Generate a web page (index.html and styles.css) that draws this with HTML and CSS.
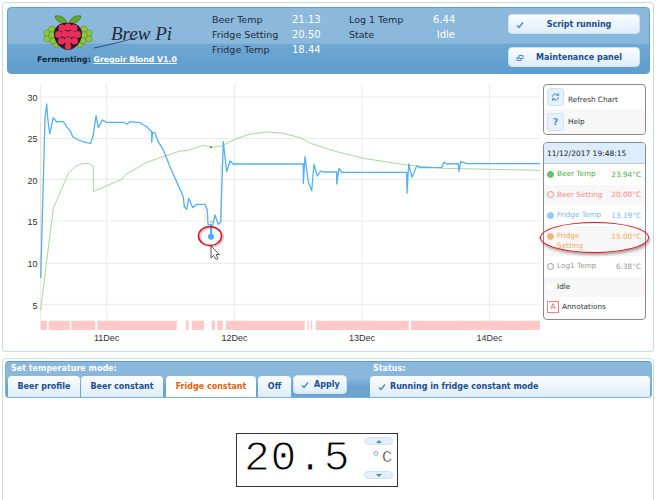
FILE: index.html
```html
<!DOCTYPE html>
<html lang="en">
<head>
    <meta charset="UTF-8">
    <meta name="viewport" content="width=device-width, initial-scale=1.0">
    <title>BrewPi</title>
    <link rel="stylesheet" href="styles.css">
</head>
<body>
    <div class="panel top-panel">
        <div class="header">
            <div class="brand">
                <div class="logo-row">
                    <svg class="logo" width="54" height="36" viewBox="0 0 54 36">
                        <!-- hops -->
                        <g fill="#8cc63f" stroke="#55801f" stroke-width="0.5">
                            <circle cx="6" cy="18" r="3.2"/><circle cx="11" cy="14" r="3.2"/><circle cx="11" cy="20" r="3.2"/><circle cx="6" cy="24" r="3.2"/>
                            <circle cx="12" cy="26" r="3.2"/><circle cx="16" cy="18" r="3"/><circle cx="15" cy="30" r="2.6"/>
                            <circle cx="48" cy="18" r="3.2"/><circle cx="43" cy="14" r="3.2"/><circle cx="43" cy="20" r="3.2"/><circle cx="48" cy="24" r="3.2"/>
                            <circle cx="42" cy="26" r="3.2"/><circle cx="38" cy="18" r="3"/><circle cx="39" cy="30" r="2.6"/>
                        </g>
                        <!-- leaves -->
                        <path d="M26 9C20 9 15 6 14 1C20 0 25 3 26 9Z" fill="#5fa82b" stroke="#2f6b14" stroke-width="0.6"/>
                        <path d="M28 9C34 9 39 6 40 1C34 0 29 3 28 9Z" fill="#5fa82b" stroke="#2f6b14" stroke-width="0.6"/>
                        <!-- berry -->
                        <path d="M27 8C34 7 41 11 41 19C41 28 33 35 27 35C21 35 13 28 13 19C13 11 20 7 27 8Z" fill="#2b1a20"/>
                        <g fill="#e8305c">
                            <circle cx="21" cy="13" r="3.6"/><circle cx="27" cy="12" r="3.4"/><circle cx="33" cy="13" r="3.6"/>
                            <circle cx="17.5" cy="19.5" r="3.4"/><circle cx="24" cy="19" r="3.6"/><circle cx="30.5" cy="19" r="3.6"/><circle cx="36.5" cy="19.5" r="3.4"/>
                            <circle cx="20.5" cy="26" r="3.5"/><circle cx="27" cy="25.5" r="3.6"/><circle cx="33.5" cy="26" r="3.5"/>
                            <circle cx="27" cy="31.5" r="3.2"/>
                        </g>
                    </svg>
                    <div class="signature">
                        <span class="signature-text">Brew Pi</span>
                        <svg class="signature-swoosh" width="78" height="30" viewBox="0 0 78 30">
                            <path d="M0 27C14 24 28 21 44 16" fill="none" stroke="#1d2b3a" stroke-width="0.7"/>
                        </svg>
                    </div>
                </div>
                <p class="fermenting">Fermenting: <a href="#" class="beer-name">Gregoir Blond V1.0</a></p>
            </div>

            <div class="stats">
                <span class="stat-label">Beer Temp</span><span class="stat-value">21.13</span>
                <span class="stat-label">Log 1 Temp</span><span class="stat-value right">6.44</span>
                <span class="stat-label">Fridge Setting</span><span class="stat-value">20.50</span>
                <span class="stat-label">State</span><span class="stat-value right">Idle</span>
                <span class="stat-label">Fridge Temp</span><span class="stat-value">18.44</span>
            </div>

            <div class="header-buttons">
                <button class="btn header-btn">
                    <svg class="btn-icon" width="8" height="8" viewBox="0 0 8 8"><path d="M1 4.5L3 6.5L7 1.5" fill="none" stroke="#4f8cc4" stroke-width="1.5"/></svg>
                    <span>Script running</span>
                </button>
                <button class="btn header-btn">
                    <svg class="btn-icon" width="8" height="8" viewBox="0 0 8 8"><path d="M3 1.5H7V4.5H3ZM1 3.5H3M1 3.5V6.5H5V4.5" fill="none" stroke="#4f8cc4"/></svg>
                    <span>Maintenance panel</span>
                </button>
            </div>
        </div>

        <div class="chart-row">
            <svg class="chart" width="534" height="277" viewBox="7 74 534 277">
                <g class="grid">
                    <path d="M40.7 97H540M40.7 138.5H540M40.7 179.5H540M40.7 263.3H540M40.7 304.3H540"/>
                    <path d="M40.7 84V330M106.7 84V330M234.4 84V330M362 84V330M489.4 84V330"/>
                </g>
                <path class="setting-line" d="M40.7 221H540"/>

                <g class="idle-band">
                    <rect x="40.7" y="320.7" width="6.3" height="9.3"/>
                    <rect x="48.7" y="320.7" width="21" height="9.3"/>
                    <rect x="71.3" y="320.7" width="24" height="9.3"/>
                    <rect x="97.3" y="320.7" width="79.4" height="9.3"/>
                    <rect x="186" y="320.7" width="2.7" height="9.3"/>
                    <rect x="191.7" y="320.7" width="12.3" height="9.3"/>
                    <rect x="211.7" y="320.7" width="3.3" height="9.3"/>
                    <rect x="217.3" y="320.7" width="5.4" height="9.3"/>
                    <rect x="226" y="320.7" width="78.7" height="9.3"/>
                    <rect x="307.3" y="320.7" width="1.4" height="9.3"/>
                    <rect x="310.7" y="320.7" width="1.6" height="9.3"/>
                    <rect x="315.7" y="320.7" width="93" height="9.3"/>
                    <rect x="411" y="320.7" width="129" height="9.3"/>
                </g>

                <path class="line-fridge-setting" d="M40.7 122V278M205 208V222M221 163V222"/>
                <path class="line-beer" d="M40.7 310L43.3 288L48.3 248.3L53.3 208.3L58.3 196.7L68.3 173.3L75 166.7L81.7 163.7L88.3 163.3L93.3 166.3V191.7L121.7 179.3L126 174.3L146.7 162.3L180 151L186.7 150.7L203.3 145.3L210.7 147.3L221.7 146L233.3 140L250 134L266.7 132L283.3 133.3L300 137.7L311.7 143.7L336.7 151.7L363.3 158.3L406.7 165L443.3 168.3L540 170.3"/>
                <path class="line-fridge" d="M40.7 278L45 118L46.7 104L47.7 118L49.7 134L53.3 117.7L56.7 122L58.3 121.7L63.3 121.7L66.7 126.7L70.7 131.7L72.7 136.7L78.3 140L86.7 142.7L90.7 143.3L93.3 135L96 115.7L98.3 127.7L102.3 120L106.7 122.3H123.3L126.7 124.3L130 121.7L140 122.7L146.7 126.7L151.7 131.7V142.3L152.7 132.3L155 133L158.3 141.7L163.3 150L170 166.7L183.3 196.7L184.3 206.7L186.7 209.3L188.7 198.3L192.7 207.7L196.7 204.3H205L207.3 210L208 224.3L210.7 225V236.7H211.5V225H212.7L215 215L218.3 224.3L220.7 222.3L223.3 141.7L226.7 171.7L230 161L233.3 164H303.3V183.3L305 156.7L308.3 181.7L311.7 190.7L314 164.3L317.3 176L320.7 171L323.3 172H336.7V184L339 168.3L341.7 172.3H406.7L407 193.3L408.7 164L412 177.3L416.7 166L420 167.7H441.7L444 162.3L446.7 164L458.3 163.7L459 171.7L460.7 161.3L466.7 163.7H540"/>

                <circle class="dot-beer" cx="211" cy="147.3" r="1"/>
                <circle class="dot-setting" cx="211" cy="222" r="1"/>
                <circle class="dot-log" cx="539.5" cy="238" r="1"/>
                <circle class="dot-fridge" cx="211" cy="236.7" r="3"/>

                <g class="axis-y">
                    <text x="37.5" y="101">30</text>
                    <text x="37.5" y="142">25</text>
                    <text x="37.5" y="184">20</text>
                    <text x="37.5" y="225">15</text>
                    <text x="37.5" y="267">10</text>
                    <text x="37.5" y="309">5</text>
                </g>
                <g class="axis-x">
                    <text x="106.7" y="341">11Dec</text>
                    <text x="234.4" y="341">12Dec</text>
                    <text x="362" y="341">13Dec</text>
                    <text x="489.4" y="341">14Dec</text>
                </g>

                <ellipse class="marker-shadow" cx="211.5" cy="237" rx="11.5" ry="9.5"/>
                <ellipse class="marker" cx="210" cy="236" rx="11.5" ry="9.5"/>
                <path class="mouse-cursor" d="M211 246V258L213.5 255.5L216 259.5L218 258.5L216 254.5H219.5Z"/>
            </svg>

            <div class="side">
                <div class="side-box">
                    <div class="tool-row">
                        <span class="tool-icon">
                            <svg width="9" height="10" viewBox="0 0 9 10"><path d="M1.5 5A3 3 0 0 1 7 3.3M7.5 5A3 3 0 0 1 2 6.7M7.5 1V3.5H5M1.5 9V6.5H4" fill="none" stroke="#6ea5d6" stroke-width="1.2"/></svg>
                        </span>
                        <span class="tool-label">Refresh Chart</span>
                    </div>
                    <div class="tool-row">
                        <span class="tool-icon tool-help">?</span>
                        <span>Help</span>
                    </div>
                </div>

                <div class="side-box legend">
                    <div class="legend-time">11/12/2017 19:48:15</div>
                    <div class="legend-row beer">
                        <span class="legend-dot filled"></span><span class="legend-name">Beer Temp</span><span class="legend-value">23.94°C</span>
                    </div>
                    <div class="legend-row setting striped">
                        <span class="legend-dot"></span><span class="legend-name">Beer Setting</span><span class="legend-value">20.00°C</span>
                    </div>
                    <div class="legend-row fridge">
                        <span class="legend-dot filled"></span><span class="legend-name">Fridge Temp</span><span class="legend-value">13.19°C</span>
                    </div>
                    <div class="legend-row fridge-setting striped">
                        <span class="legend-dot filled"></span><span class="legend-name">Fridge<br>Setting</span><span class="legend-value">15.00°C</span>
                    </div>
                    <div class="legend-row log">
                        <span class="legend-dot"></span><span class="legend-name">Log1 Temp</span><span class="legend-value">6.38°C</span>
                    </div>
                    <div class="legend-row idle striped">
                        <span class="idle-box"></span><span class="legend-name">Idle</span>
                    </div>
                    <div class="legend-row annotations">
                        <span class="annotation-icon">A</span><span class="legend-name">Annotations</span>
                    </div>
                    <div class="legend-ellipse"></div>
                </div>
            </div>
        </div>
    </div>

    <div class="panel mode-panel">
        <div class="mode-bar">
            <div class="mode-left">
                <div class="mode-title">Set temperature mode:</div>
                <div class="tabs">
                    <span class="tab tab-profile">Beer profile</span>
                    <span class="tab tab-beer">Beer constant</span>
                    <span class="tab tab-active">Fridge constant</span>
                    <span class="tab tab-off">Off</span>
                    <button class="btn apply-btn">
                        <svg width="8" height="8" viewBox="0 0 8 8"><path d="M1 4.5L3 6.5L7 1.5" fill="none" stroke="#4f8cc4" stroke-width="1.5"/></svg>
                        <span>Apply</span>
                    </button>
                </div>
            </div>
            <div class="mode-right">
                <div class="mode-title">Status:</div>
                <div class="status-box">
                    <svg width="8" height="8" viewBox="0 0 8 8"><path d="M1 4.5L3 6.5L7 1.5" fill="none" stroke="#4f8cc4" stroke-width="1.5"/></svg>
                    <span>Running in fridge constant mode</span>
                </div>
            </div>
        </div>

        <div class="lcd">
            <div class="lcd-digits">20.5</div>
            <div class="lcd-controls">
                <span class="lcd-btn"><span class="arrow-up"></span></span>
                <span class="lcd-unit">°C</span>
                <span class="lcd-btn"><span class="arrow-down"></span></span>
            </div>
        </div>
    </div>
</body>
</html>
```

FILE: styles.css
```css
* {
    margin: 0;
    padding: 0;
    box-sizing: border-box;
    font-family: "DejaVu Sans", sans-serif;
}

html,
body {
    height: 500px;
    overflow: hidden;
}

body {
    background: #fff;
    padding: 2px 8px 0 2px;
}

.panel {
    border: 1px solid #c3dbee;
    border-radius: 4px;
    background: #fff;
}

.top-panel {
    height: 350px;
    padding: 4px 3px 0 4px;
}

.header {
    display: flex;
    height: 67px;
    border: 1px solid #5f9fd0;
    border-radius: 4px;
    background: linear-gradient(#8cb9dc, #8ab8db 54%, #6fa7d3 56%, #5e9dcd);
}

.brand {
    width: 204px;
    padding: 7px 0 0 29px;
}

.logo-row {
    display: flex;
    height: 40px;
    margin-left: 4px;
}

.signature {
    position: relative;
    width: 78px;
    margin-top: 8px;
    margin-left: -1px;
}

.signature-text {
    margin-left: 17px;
    font-family: "Liberation Serif", serif;
    font-style: italic;
    font-size: 19px;
    color: #1d2b3a;
    white-space: nowrap;
}

.signature-swoosh {
    position: absolute;
    left: 0;
    top: -2px;
}

.fermenting {
    font-size: 7.8px;
    font-weight: bold;
    color: #15263a;
    white-space: nowrap;
}

.beer-name {
    color: #fff;
}

.stats {
    display: grid;
    grid-template-columns: 80px 57px 84px 22px;
    grid-auto-rows: 15px;
    align-items: center;
    width: 296px;
    padding-top: 4px;
    height: 52px;
}

.stat-label {
    font-size: 9.5px;
    color: #1f2c3d;
    white-space: nowrap;
}

.stat-value {
    font-size: 10px;
    color: #fff;
    white-space: nowrap;
}

.stat-value.right {
    text-align: right;
}

.header-buttons {
    display: flex;
    flex-direction: column;
    gap: 13px;
    padding-top: 6px;
}

.btn {
    display: flex;
    align-items: center;
    border: 1px solid #cfe2f2;
    border-radius: 4px;
    background: linear-gradient(#fafdff, #deedf9);
    color: #1b4d8c;
    font-weight: bold;
    font-size: 8px;
}

.header-btn {
    position: relative;
    justify-content: center;
    width: 132px;
    height: 20px;
    padding-left: 10px;
}

.btn-icon {
    position: absolute;
    left: 7px;
    top: 6px;
}

.chart-row {
    display: flex;
}

.chart {
    display: block;
}

.grid path {
    fill: none;
    stroke: #ebebeb;
    stroke-width: 1;
}

.setting-line {
    fill: none;
    stroke: #d9d9d9;
    stroke-width: 1;
    stroke-dasharray: 1 1;
}

.idle-band rect {
    fill: #fdc9c9;
}

.line-beer {
    fill: none;
    stroke: #a5d9a0;
    stroke-width: 1;
}

.line-fridge {
    fill: none;
    stroke: #54b0f6;
    stroke-width: 1.3;
    stroke-linejoin: round;
}

.line-fridge-setting {
    fill: none;
    stroke: #fbdcc0;
    stroke-width: 1;
}

.dot-beer {
    fill: #2a9a2a;
}

.dot-setting {
    fill: #f5a14f;
}

.dot-log {
    fill: #f0b0b0;
}

.dot-fridge {
    fill: #4bacf5;
}

.axis-y text,
.axis-x text {
    font-family: "Liberation Sans", sans-serif;
    font-size: 9px;
    fill: #333;
}

.axis-y text {
    text-anchor: end;
}

.axis-x text {
    text-anchor: middle;
}

.marker {
    fill: none;
    stroke: #e2101a;
    stroke-width: 1.5;
}

.marker-shadow {
    fill: none;
    stroke: rgba(0, 0, 0, 0.2);
    stroke-width: 2;
}

.mouse-cursor {
    fill: #fff;
    stroke: #333;
    stroke-width: 0.8;
}

.side {
    display: flex;
    flex-direction: column;
    gap: 7px;
    width: 103px;
    margin-left: 2px;
    padding-top: 10px;
}

.side-box {
    border: 1px solid #8a8a8a;
    border-radius: 4px;
    font-size: 7.3px;
    color: #333;
}

.tool-row {
    display: flex;
    align-items: center;
    gap: 4px;
    height: 24px;
    padding-left: 3px;
}

.tool-row + .tool-row {
    background: #f7f7f7;
    height: 25px;
    border-radius: 0 0 4px 4px;
}

.tool-label {
    margin-top: 4px;
}

.tool-icon {
    display: flex;
    align-items: center;
    justify-content: center;
    width: 17px;
    height: 18px;
    border: 1px solid #cfe2f2;
    border-radius: 3px;
    background: #e6f1fb;
}

.tool-help {
    color: #4f8cc4;
    font-weight: bold;
    font-size: 9px;
}

.legend {
    position: relative;
    height: 177.5px;
}

.legend-time {
    display: flex;
    align-items: center;
    height: 21px;
    padding-left: 3px;
    background: #dcedfd;
    border-radius: 3px 3px 0 0;
    border-bottom: 1px solid #c8c8c8;
    font-size: 7.5px;
    color: #222;
}

.legend-row {
    display: flex;
    align-items: center;
    height: 20.5px;
    padding: 0 4px 0 3px;
}

.legend-row.striped {
    background: #f7f7f7;
}

.legend-dot {
    flex: none;
    width: 7px;
    height: 7px;
    margin-right: 3px;
    border: 1px solid currentColor;
    border-radius: 50%;
}

.legend-dot.filled {
    background: currentColor;
    opacity: 0.8;
}

.legend-name {
    flex: 1;
    line-height: 10px;
}

.legend-value {
    white-space: nowrap;
}

.beer {
    color: #45ad45;
}

.setting {
    color: #f78b8b;
}

.fridge {
    color: #74bcf5;
}

.fridge-setting {
    height: 30.5px;
    color: #f4a760;
}

.fridge-setting .legend-dot {
    align-self: flex-start;
    margin-top: 7px;
}

.fridge-setting .legend-value {
    align-self: flex-start;
    margin-top: 6px;
}

.log {
    color: #9a9a9a;
}

.idle {
    color: #333;
}

.idle-box {
    width: 6px;
    height: 6px;
    margin-right: 4px;
    background: #fff;
}

.annotations {
    color: #333;
}

.annotation-icon {
    flex: none;
    width: 12px;
    height: 12px;
    margin-right: 3px;
    border: 1px solid #f08080;
    text-align: center;
    line-height: 10px;
    font-size: 7.5px;
    color: #e85c5c;
}

.legend-ellipse {
    position: absolute;
    left: -4px;
    top: 79px;
    width: 109px;
    height: 31px;
    border: 1.5px solid #e2101a;
    border-radius: 50%;
    box-shadow: 1px 2px 3px rgba(0, 0, 0, 0.35);
}

.mode-panel {
    height: 150px;
    margin-top: 6px;
    padding: 2px 0 0 2px;
}

.mode-bar {
    display: flex;
    width: 647px;
    height: 37px;
    border: 1px solid #7db1da;
    border-top-color: #5b9bcd;
    border-radius: 4px;
    background: linear-gradient(#8ab8dc, #8ab8dc 45%, #6aa3d0 70%, #6ba4d1);
}

.mode-left {
    width: 362px;
    padding-left: 2px;
}

.mode-right {
    flex: 1;
}

.mode-title {
    height: 14px;
    padding-left: 3px;
    color: #fff;
    font-weight: bold;
    font-size: 8px;
    line-height: 14px;
}

.tabs {
    display: flex;
    align-items: flex-start;
    gap: 1px;
}

.tab {
    display: flex;
    align-items: center;
    justify-content: center;
    height: 21px;
    border-radius: 4px 4px 0 0;
    background: linear-gradient(#fafdff, #deedf9);
    color: #1b4d8c;
    font-weight: bold;
    font-size: 8px;
}

.tab-profile {
    width: 72px;
}

.tab-beer {
    width: 82px;
}

.tab-active {
    width: 90px;
    margin-left: 2px;
    background: #fff;
    color: #e8600c;
}

.tab-off {
    width: 33px;
    margin-left: 1px;
}

.apply-btn {
    gap: 5px;
    width: 54px;
    height: 19px;
    margin-top: -1px;
    margin-left: 1px;
    padding-left: 7px;
}

.mode-right .mode-title {
    padding-left: 5px;
}

.status-box {
    display: flex;
    align-items: center;
    gap: 4px;
    width: 280px;
    height: 21px;
    margin-left: 2px;
    padding-left: 8px;
    border-radius: 4px 4px 0 0;
    background: linear-gradient(#fafdff, #deedf9);
    color: #1b4d8c;
    font-weight: bold;
    font-size: 8px;
}

.lcd {
    display: flex;
    width: 162px;
    height: 54px;
    margin: 35px 0 0 231px;
    border: 1px solid #333;
}

/* white outline thins the mono glyphs down to the LCD look */
.lcd-digits {
    width: 127px;
    padding-left: 7px;
    font-family: "Liberation Mono", monospace;
    font-size: 43px;
    line-height: 49px;
    letter-spacing: 0.8px;
    color: #000;
    -webkit-text-stroke: 1px #fff;
    white-space: nowrap;
}

.lcd-controls {
    display: flex;
    flex-direction: column;
    align-items: center;
    width: 29px;
    padding-top: 3px;
}

.lcd-btn {
    display: flex;
    align-items: center;
    justify-content: center;
    width: 29px;
    height: 8px;
    border: 1px solid #cfe2f2;
    border-radius: 4px;
    background: #e3effa;
}

.lcd-unit {
    height: 26px;
    margin-left: 7px;
    font-family: "Liberation Mono", monospace;
    font-size: 17px;
    line-height: 26px;
    letter-spacing: 1px;
    color: #222;
    -webkit-text-stroke: 0.5px #fff;
}

.arrow-up,
.arrow-down {
    border-left: 3px solid transparent;
    border-right: 3px solid transparent;
}

.arrow-up {
    border-bottom: 3px solid #4f8cc4;
}

.arrow-down {
    border-top: 3px solid #4f8cc4;
}
```
